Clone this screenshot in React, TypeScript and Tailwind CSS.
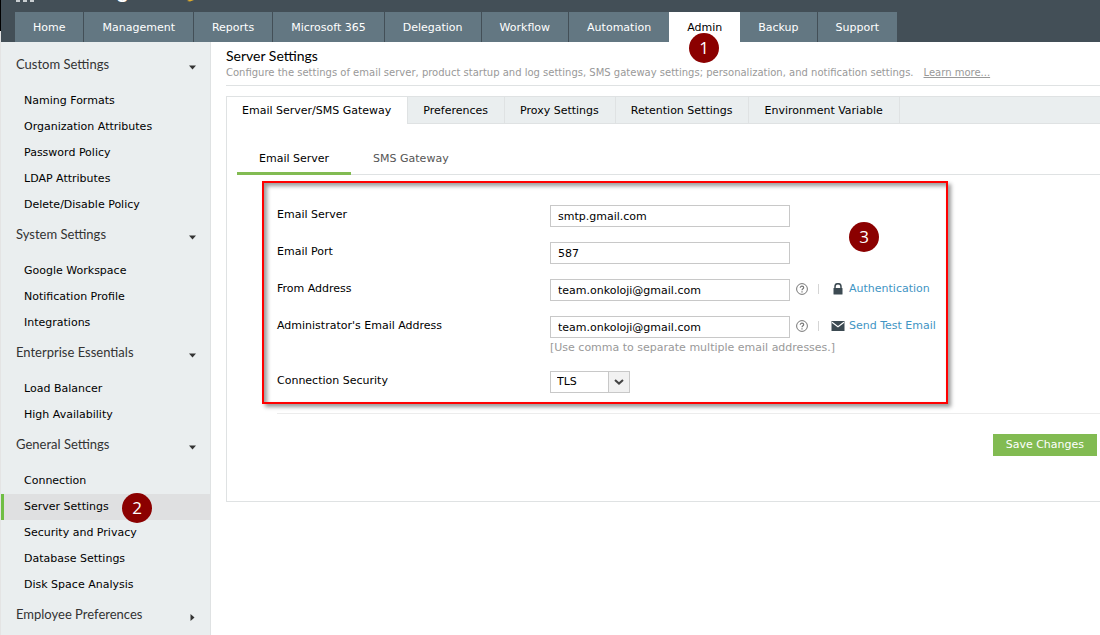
import React, { useState } from 'react';
import clsx from 'clsx';

const NAV_ITEMS = [
  'Home',
  'Management',
  'Reports',
  'Microsoft 365',
  'Delegation',
  'Workflow',
  'Automation',
  'Admin',
  'Backup',
  'Support',
];

const SIDEBAR_SECTIONS = [
  {
    title: 'Custom Settings',
    items: ['Naming Formats', 'Organization Attributes', 'Password Policy', 'LDAP Attributes', 'Delete/Disable Policy'],
  },
  { title: 'System Settings', items: ['Google Workspace', 'Notification Profile', 'Integrations'] },
  { title: 'Enterprise Essentials', items: ['Load Balancer', 'High Availability'] },
  {
    title: 'General Settings',
    items: ['Connection', 'Server Settings', 'Security and Privacy', 'Database Settings', 'Disk Space Analysis'],
  },
  { title: 'Employee Preferences', items: [] },
];

const SETTINGS_TABS = [
  'Email Server/SMS Gateway',
  'Preferences',
  'Proxy Settings',
  'Retention Settings',
  'Environment Variable',
];

const StepBadge: React.FC<{ step: number; className: string }> = ({ step, className }) => (
  <span
    className={clsx(
      "absolute z-10 flex h-[30px] w-[30px] items-center justify-center rounded-full bg-[#8b0000] pb-px font-['Open_Sans',sans-serif] text-[17px] leading-none text-white",
      className
    )}
  >
    {step}
  </span>
);

const HelpIcon: React.FC = () => (
  <svg className="h-3 w-3 shrink-0" viewBox="0 0 12 12" fill="none" stroke="#777" aria-hidden="true">
    <circle cx="6" cy="6" r="5.4" />
    <path d="M4.3 4.8C4.3 3.7 5 3.2 6 3.2s1.7.6 1.7 1.5C7.7 5.8 6 5.8 6 7.2M6 8.2v1.2" strokeWidth="1.2" />
  </svg>
);

const LockIcon: React.FC = () => (
  <svg className="h-3 w-[14px] shrink-0" viewBox="0 0 14 12" aria-hidden="true">
    <path d="M4 6V3.7a3 3 0 0 1 6 0V6" fill="none" stroke="#3c4a52" strokeWidth="1.5" />
    <rect x="2.5" y="5" width="9" height="6.5" rx=".6" fill="#3c4a52" />
  </svg>
);

const MailIcon: React.FC = () => (
  <svg className="h-3 w-[14px] shrink-0" viewBox="0 0 14 12" aria-hidden="true">
    <rect x=".5" y="1" width="13" height="10" fill="#3c4a52" />
    <path d="M1 2.2l6 4.6 6-4.6" fill="none" stroke="#fff" strokeWidth="1.1" />
  </svg>
);

const TopBar: React.FC = () => (
  <header className="bg-[#434f57] pl-[14px]">
    <div className="flex h-3 items-start overflow-hidden">
      <svg className="h-2 w-[19px] shrink-0" viewBox="0 0 19 8" fill="#c9ced1" aria-hidden="true">
        <rect x="1" width="4" height="2" />
        <rect x="8" width="4" height="2" />
        <rect x="15" width="4" height="2" />
      </svg>
      <span className="-mt-[18px] pl-1 font-['Lato',sans-serif] text-[20px] leading-4 font-bold text-white">ADManager</span>
      <svg className="ml-10 h-2 w-3 shrink-0" viewBox="0 0 12 8" aria-hidden="true">
        <path d="M3 0h5L4 1.6 1 1z" fill="#e0ac2b" />
      </svg>
    </div>
    <nav className="flex h-[30px] text-white">
      {NAV_ITEMS.map((item) => (
        <a
          key={item}
          href="#"
          className={clsx(
            'relative flex items-center px-[18px] pt-[3px] whitespace-nowrap',
            item === 'Admin' ? 'bg-white text-black' : 'bg-[#637782]',
            !['Automation', 'Admin', 'Support'].includes(item) && 'border-r border-[#434f57]'
          )}
        >
          {item}
          {item === 'Admin' && <StepBadge step={1} className="top-[21px] left-5" />}
        </a>
      ))}
    </nav>
  </header>
);

const Sidebar: React.FC = () => (
  <aside className="w-[210px] shrink-0 border-r border-[#dfe2e3] bg-[#eaeeef] pt-[6px]">
    {SIDEBAR_SECTIONS.map((section) => (
      <section key={section.title}>
        <h2 className="flex h-10 items-center justify-between pr-[14px] pb-[6px] pl-[15px] font-['Lato',sans-serif] text-[13px] text-[#333]">
          {section.title}
          {section.items.length > 0 ? (
            <svg className="mt-1 h-[5px] w-[7px]" viewBox="0 0 7 5" fill="#333" aria-hidden="true">
              <path d="M0 .5h7L3.5 4.5z" />
            </svg>
          ) : (
            <svg className="mt-1 h-[7px] w-[7px]" viewBox="0 0 7 7" fill="#333" aria-hidden="true">
              <path d="M1.5 0v7l4-3.5z" />
            </svg>
          )}
        </h2>
        <ul>
          {section.items.map((item) => (
            <li key={item} className="relative">
              <a
                href="#"
                className={clsx(
                  'flex h-[26px] items-center border-l-3 pl-5',
                  item === 'Server Settings' ? 'border-[#6fbe44] bg-[#dfe0e1]' : 'border-transparent'
                )}
              >
                {item}
              </a>
              {item === 'Server Settings' && <StepBadge step={2} className="-top-px left-[121px]" />}
            </li>
          ))}
        </ul>
      </section>
    ))}
  </aside>
);

const Field: React.FC<{ id: string; label: string; children: React.ReactNode }> = ({ id, label, children }) => (
  <div className="grid grid-cols-[273px_1fr]">
    <label htmlFor={id} className="h-5 leading-5">
      {label}
    </label>
    <div className="flex h-[22px] items-center">{children}</div>
  </div>
);

const TextBox: React.FC<{ id: string; value: string }> = ({ id, value }) => (
  <input
    id={id}
    type="text"
    defaultValue={value}
    className="h-[22px] w-60 shrink-0 border border-[#c8c8c8] bg-white px-[7px] text-[11px] outline-none"
  />
);

const FieldAction: React.FC<{ icon: React.ReactNode; label: string }> = ({ icon, label }) => (
  <div className="flex h-5 items-center self-start pl-[6px] leading-5 whitespace-nowrap">
    <HelpIcon />
    <span className="mr-3 ml-[10px] h-[10px] w-px bg-[#d5d5d5]" />
    {icon}
    <a href="#" className="pl-1 text-[#3f95c4]">
      {label}
    </a>
  </div>
);

const EmailServerForm: React.FC = () => {
  const [security, setSecurity] = useState('TLS');

  return (
    <div className="relative mt-[6px] ml-[35px] w-[686px] border-2 border-[#f00] pt-[22px] pb-[9px] pl-[13px] shadow-[3px_3px_4px_#0006,inset_3px_3px_4px_#0006]">
      <StepBadge step={3} className="top-[39px] right-[67px]" />
      <div className="flex flex-col gap-[15px]">
        <Field id="server" label="Email Server">
          <TextBox id="server" value="smtp.gmail.com" />
        </Field>
        <Field id="port" label="Email Port">
          <TextBox id="port" value="587" />
        </Field>
        <Field id="from" label="From Address">
          <TextBox id="from" value="team.onkoloji@gmail.com" />
          <FieldAction icon={<LockIcon />} label="Authentication" />
        </Field>
        <Field id="admin" label="Administrator's Email Address">
          <TextBox id="admin" value="team.onkoloji@gmail.com" />
          <FieldAction icon={<MailIcon />} label="Send Test Email" />
        </Field>
      </div>
      <p className="mb-[13px] ml-[273px] h-5 leading-5 text-[#999]">
        [Use comma to separate multiple email addresses.]
      </p>
      <Field id="security" label="Connection Security">
        <div className="relative">
          <select
            id="security"
            value={security}
            onChange={(e) => setSecurity(e.target.value)}
            className="block h-[22px] w-20 appearance-none border border-[#c8c8c8] bg-white pt-px pl-[6px] text-[11px] outline-none"
          >
            <option>TLS</option>
            <option>SSL</option>
            <option>None</option>
          </select>
          <span className="pointer-events-none absolute top-px right-px flex h-5 w-[21px] items-center justify-center border-l border-[#c8c8c8] bg-[#f1f1f1]">
            <svg className="h-[6px] w-[10px]" viewBox="0 0 10 6" fill="none" stroke="#444" strokeWidth="2" aria-hidden="true">
              <path d="M1 1l4 3.6L9 1" />
            </svg>
          </span>
        </div>
      </Field>
    </div>
  );
};

const App: React.FC = () => {
  const [activeTab, setActiveTab] = useState(SETTINGS_TABS[0]);

  return (
    <div className="flex min-h-screen overflow-hidden bg-white font-['DejaVu_Sans',Verdana,sans-serif] text-[11px] text-black">
      <div className="w-px shrink-0 bg-[#e4e4e4]">
        <div className="h-[31px] bg-black" />
      </div>
      <div className="flex min-w-0 flex-1 flex-col">
        <TopBar />
        <div className="flex flex-1">
          <Sidebar />
          <main className="min-w-0 flex-1 pl-[15px]">
            <div className="border-b border-[#dfe2e3] pt-1 pb-[5px]">
              <h1 className="h-5 font-['Lato',sans-serif] text-[14px] leading-5">Server Settings</h1>
              <p className="h-[14px] text-[10px] leading-[14px] whitespace-nowrap text-[#999]">
                Configure the settings of email server, product startup and log settings, SMS gateway settings;
                personalization, and notification settings.
                <a href="#" className="ml-[10px] underline">
                  Learn more...
                </a>
              </p>
            </div>

            <div className="mt-[10px] border-y border-l border-[#dfe2e3]">
              <div className="flex h-[27px]">
                {SETTINGS_TABS.map((tab) => (
                  <button
                    key={tab}
                    type="button"
                    onClick={() => setActiveTab(tab)}
                    className={clsx(
                      'border-r border-[#dfe2e3] pr-4 pl-[15px] whitespace-nowrap',
                      activeTab === tab ? 'bg-white pt-px' : 'border-b bg-[#eaeeef] pt-[2px]'
                    )}
                  >
                    {tab}
                  </button>
                ))}
                <div className="flex-1 border-b border-[#dfe2e3] bg-[#eaeeef]" />
              </div>

              <div className="mt-[17px] ml-[10px] flex h-[34px] border-b border-[#dfe2e3]">
                <button type="button" className="-mb-px border-b-3 border-[#82bb52] px-[22px] pt-[5px]">
                  Email Server
                </button>
                <button type="button" className="px-[22px] pt-1 text-[#555]">
                  SMS Gateway
                </button>
              </div>

              <EmailServerForm />

              <div className="mt-[9px] ml-[50px] flex justify-end border-t border-[#ececec] pt-5 pr-[3px] pb-[45px]">
                <button type="button" className="h-[22px] bg-[#82bb52] px-[13px] pt-px text-white">
                  Save Changes
                </button>
              </div>
            </div>
          </main>
        </div>
      </div>
    </div>
  );
};

export default App;
